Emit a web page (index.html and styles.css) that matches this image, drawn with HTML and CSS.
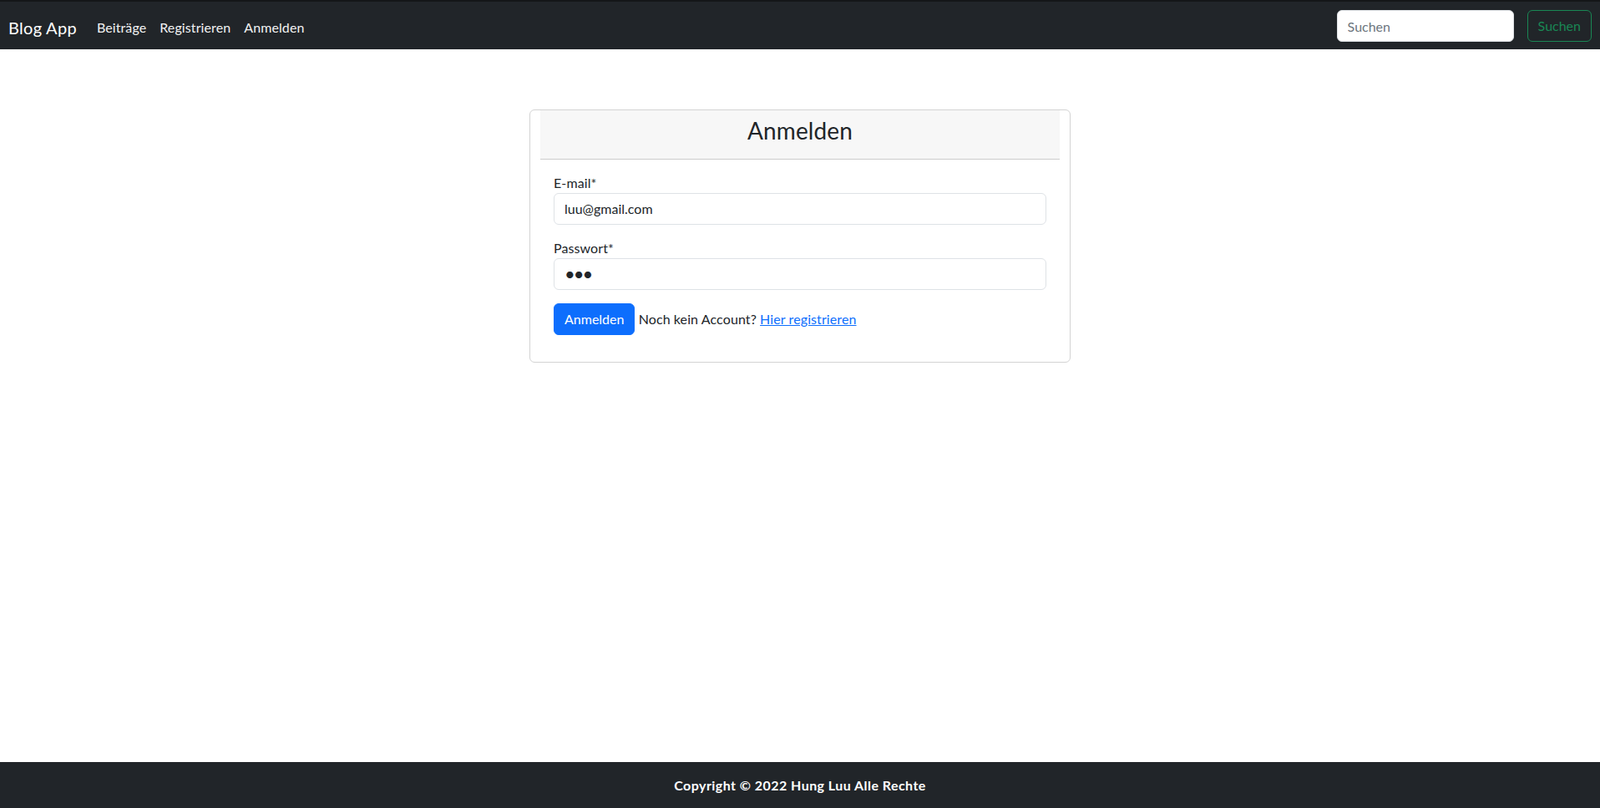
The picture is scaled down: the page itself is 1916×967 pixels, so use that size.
FILE: index.html
```html
<!DOCTYPE html>
<html lang="de">
<head>
<meta charset="utf-8">
<title>Blog App – Anmelden</title>
<link rel="stylesheet" href="styles.css">
</head>
<body>
<nav class="navbar">
  <a class="brand" href="#">Blog App</a>
  <ul class="nav-links">
    <li><a href="#">Beiträge</a></li>
    <li><a href="#">Registrieren</a></li>
    <li><a href="#">Anmelden</a></li>
  </ul>
  <form class="search">
    <input class="search-input" type="search" placeholder="Suchen">
    <button class="btn btn-outline-success" type="button">Suchen</button>
  </form>
</nav>
<main class="main">
  <div class="card">
    <div class="card-header"><h3 class="card-title">Anmelden</h3></div>
    <div class="card-body">
      <form>
        <div class="field">
          <label class="label" for="email">E-mail*</label>
          <input class="form-control" id="email" type="text" value="luu@gmail.com">
        </div>
        <div class="field">
          <label class="label" for="pw">Passwort*</label>
          <input class="form-control password" id="pw" type="password" value="abc">
        </div>
        <div class="actions">
          <button class="btn btn-primary" type="button">Anmelden</button>
          Noch kein Account? <a class="link" href="#">Hier registrieren</a>
        </div>
      </form>
    </div>
  </div>
</main>
<footer class="footer">Copyright © 2022 Hung Luu Alle Rechte</footer>
</body>
</html>
```
FILE: styles.css
```css
* { box-sizing: border-box; }
html, body { margin: 0; padding: 0; }
body {
  font-family: Lato, "Noto Sans", sans-serif;
  font-size: 16px;
  line-height: 24px;
  letter-spacing: 0.1px;
  color: #212529;
  background: #fff;
  min-height: 100vh;
  display: flex;
  flex-direction: column;
}
.navbar {
  background: #212529;
  border-top: 2px solid #141618;
  display: flex;
  align-items: center;
  padding: 9px 10px 8px 10px;
}
.brand {
  color: #fff;
  text-decoration: none;
  font-size: 20px;
  line-height: 30px;
  letter-spacing: 0.3px;
  padding: 7px 0 3px 0;
  margin-right: 16px;
}
.nav-links {
  list-style: none;
  margin: 0;
  padding: 0;
  display: flex;
  flex: 1;
}
.nav-links a {
  display: block;
  color: #f2f2f2;
  text-decoration: none;
  padding: 10px 8px 6px 8px;
}
.search { display: flex; gap: 16px; margin: 0; }
.search-input {
  width: 212px;
  height: 38px;
  padding: 6px 12px;
  font: inherit;
  color: #212529;
  background: #fff;
  border: 1px solid #dee2e6;
  border-radius: 6px;
}
.search-input::placeholder { color: #6c757d; }
.btn {
  font: inherit;
  font-size: 16px;
  line-height: 24px;
  padding: 6px 12px;
  border-radius: 6px;
  border: 1px solid transparent;
  cursor: pointer;
}
.btn-outline-success {
  background: transparent;
  color: #198754;
  border-color: #198754;
}
.btn-primary {
  background: #0d6efd;
  border-color: #0d6efd;
  color: #fff;
}
.main { flex: 1; padding-top: 72px; }
.card {
  width: 648px;
  margin: 0 auto;
  border: 1px solid #d3d3d3;
  border-radius: 6px;
  padding: 0 12px;
}
.card-header {
  background: #f7f7f7;
  border-bottom: 1px solid #cdcdcd;
  padding: 8px 16px;
}
.card-title {
  margin: 0 0 8px 0;
  font-size: 28px;
  font-weight: 400;
  line-height: 1.2;
  text-align: center;
}
.card-body { padding: 16px; }
.field { margin-bottom: 16px; }
.label { display: block; line-height: 24px; }
.form-control {
  display: block;
  width: 100%;
  height: 38px;
  padding: 6px 12px;
  font: inherit;
  color: #212529;
  border: 1px solid #dee2e6;
  border-radius: 6px;
  background: #fff;
}
.password { font-size: 22px; letter-spacing: -2px; }
.actions { margin-bottom: 16px; }
.link { color: #0d6efd; text-decoration: underline; }
.footer {
  background: #212529;
  color: #fff;
  font-weight: 700;
  letter-spacing: 0.45px;
  text-align: center;
  padding: 16px 0 15px 0;
}
```
